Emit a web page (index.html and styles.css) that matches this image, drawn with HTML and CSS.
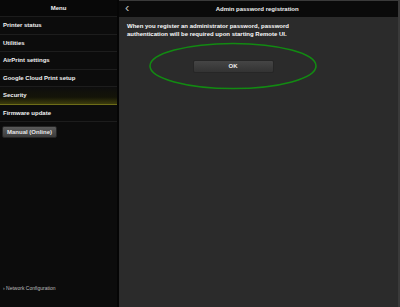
FILE: index.html
```html
<!DOCTYPE html>
<html lang="en">
<head>
    <meta charset="UTF-8">
    <title>Remote UI</title>
    <link rel="stylesheet" href="styles.css">
</head>
<body>
    <div class="sidebar">
        <div class="side-header">Menu</div>
        <div class="menu">
            <a href="#" class="menu-item">Printer status</a>
            <a href="#" class="menu-item">Utilities</a>
            <a href="#" class="menu-item">AirPrint settings</a>
            <a href="#" class="menu-item">Google Cloud Print setup</a>
            <a href="#" class="menu-item active">Security</a>
            <a href="#" class="menu-item">Firmware update</a>
        </div>
        <button class="manual-btn">Manual (Online)</button>
        <div class="side-footer">
            <a href="#">&rsaquo; Network Configuration</a>
        </div>
    </div>

    <div class="main">
        <div class="main-header">
            <span class="back">&lsaquo;</span>
            <span class="title">Admin password registration</span>
        </div>
        <div class="content">
            <p class="notice">When you register an administrator password, password authentication will be required upon starting Remote UI.</p>
            <div class="actions">
                <button class="ok-btn">OK</button>
                <!-- highlight ring around the button -->
                <svg class="ring" width="170" height="48" viewBox="0 0 170 48">
                    <ellipse cx="85" cy="24" rx="83" ry="22.5" fill="none" stroke="#128a12" stroke-width="1.6"/>
                </svg>
            </div>
        </div>
    </div>
</body>
</html>
```

FILE: styles.css
```css
body {
    margin: 0;
    width: 400px;
    height: 307px;
    display: flex;
    overflow: hidden;
    font-family: "Liberation Sans", Arial, sans-serif;
    font-weight: bold;
    font-size: 6px;
    color: #f0f0f0;
    background-color: #2b2b2b;
}

.sidebar {
    width: 117px;
    background-color: #0c0c0c;
    border-right: 2px solid #050505;
    display: flex;
    flex-direction: column;
}

.side-header {
    height: 17px;
    line-height: 17px;
    text-align: center;
    background-color: #080808;
    border-bottom: 1px solid #1c1c1c;
    box-sizing: border-box;
}

.menu {
    display: flex;
    flex-direction: column;
}

.menu-item {
    display: block;
    height: 17.5px;
    line-height: 17px;
    padding-left: 3px;
    color: #f2f2f2;
    text-decoration: none;
    border-bottom: 1px solid #1d1d1d;
    box-sizing: border-box;
}

.menu-item.active {
    background: linear-gradient(180deg, #0e0e0e 0%, #141408 60%, #3c3c0c 100%);
    border-bottom: 1.5px solid #6e6d18;
}

.manual-btn {
    align-self: flex-start;
    margin: 4px 0 0 2px;
    height: 12px;
    padding: 0 4px;
    font-family: inherit;
    font-weight: bold;
    font-size: 6px;
    color: #e6e6e6;
    background: linear-gradient(180deg, #5a5a5a 0%, #3c3c3c 100%);
    border: 1px solid #242424;
    border-radius: 2px;
}

.side-footer {
    margin-top: auto;
    padding: 0 0 16px 3px;
}

.side-footer a {
    font-weight: normal;
    font-size: 5px;
    color: #bdbdbd;
    text-decoration: none;
}

.main {
    flex: 1;
    display: flex;
    flex-direction: column;
    border-right: 2px solid #3a3a3a;
    border-top: 1px solid #3a3a3a;
}

.main-header {
    height: 16px;
    background-color: #0a0a0a;
    display: flex;
    align-items: center;
}

.back {
    font-size: 13px;
    font-weight: normal;
    color: #bbbbbb;
    margin-left: 6px;
    line-height: 16px;
    margin-top: -3px;
}

.title {
    flex: 1;
    text-align: center;
    margin-right: 13px;
}

.content {
    padding: 5px 8px;
}

.notice {
    margin: 0;
    width: 180px;
    line-height: 8px;
    color: #fafafa;
}

.actions {
    margin: 4px 0 0 21px;
    width: 170px;
    height: 48px;
    display: flex;
    align-items: center;
    justify-content: center;
    position: relative;
}

.ok-btn {
    width: 81px;
    height: 13px;
    font-family: inherit;
    font-weight: bold;
    font-size: 6px;
    color: #eeeeee;
    background: linear-gradient(180deg, #454545 0%, #333333 100%);
    border: 1px solid #262626;
    border-radius: 2px;
}

.ring {
    position: absolute;
    left: 0;
    top: 0;
}
```
